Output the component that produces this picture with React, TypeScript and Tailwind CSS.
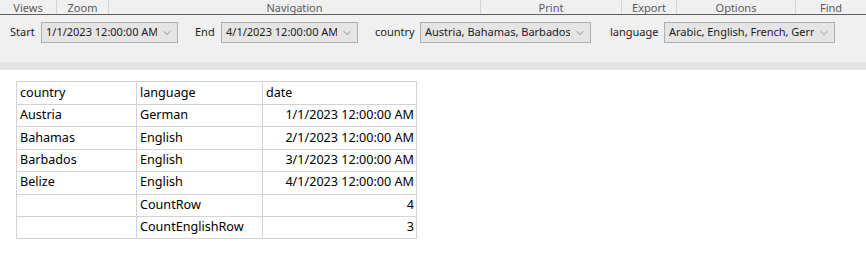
import { ChevronDown } from "lucide-react";

const groups = [
  { label: "Views", w: 57 },
  { label: "Zoom", w: 52 },
  { label: "Navigation", w: 372 },
  { label: "Print", w: 141 },
  { label: "Export", w: 55 },
  { label: "Options", w: 119 },
  { label: "Find", w: 70 },
];

const rows = [
  ["Austria", "German", "1/1/2023 12:00:00 AM"],
  ["Bahamas", "English", "2/1/2023 12:00:00 AM"],
  ["Barbados", "English", "3/1/2023 12:00:00 AM"],
  ["Belize", "English", "4/1/2023 12:00:00 AM"],
  ["", "CountRow", "4"],
  ["", "CountEnglishRow", "3"],
];

function Param({
  label,
  value,
  labelW,
  boxW,
  className = "",
}: {
  label: string;
  value: string;
  labelW: string;
  boxW: string;
  className?: string;
}) {
  return (
    <div className={`flex items-center ${className}`}>
      <span className={`${labelW} shrink-0 text-[11px] text-[#1b1b1b]`}>{label}</span>
      <div className={`${boxW} flex h-[21px] shrink-0 items-center border border-[#adadad] bg-[#e5e5e5] pl-[4px] pr-[4px]`}>
        <span className="min-w-0 flex-1 overflow-hidden whitespace-nowrap text-[11px] text-[#1b1b1b]">{value}</span>
        <ChevronDown className="ml-[4px] h-[12px] w-[12px] shrink-0 text-[#555]" strokeWidth={1.2} />
      </div>
    </div>
  );
}

export default function App() {
  return (
    <div className="h-[259px] w-[866px] overflow-hidden bg-white font-['Noto_Sans',sans-serif]">
      {/* ribbon group captions */}
      <div className="flex h-[14px] bg-[#f0f0f0]">
        {groups.map((g, i) => (
          <div
            key={g.label}
            style={{ width: g.w }}
            className={`flex h-full shrink-0 items-center justify-center text-[11px] leading-none text-[#5a5a5a] ${
              i < groups.length - 1 ? "border-r border-[#d6d6d6]" : ""
            }`}
          >
            {g.label}
          </div>
        ))}
      </div>
      <div className="h-[1px] bg-[#5f5f5f]" />

      {/* parameters */}
      <div className="flex h-[47px] items-start bg-[#f0f0f0] pl-[10px] pt-[7px]">
        <Param label="Start" value="1/1/2023 12:00:00 AM" labelW="w-[31px]" boxW="w-[137px]" />
        <Param label="End" value="4/1/2023 12:00:00 AM" labelW="w-[26px]" boxW="w-[137px]" className="ml-[17px]" />
        <Param
          label="country"
          value="Austria, Bahamas, Barbados, Belize"
          labelW="w-[45px]"
          boxW="w-[171px]"
          className="ml-[17px]"
        />
        <Param
          label="language"
          value="Arabic, English, French, German"
          labelW="w-[54px]"
          boxW="w-[171px]"
          className="ml-[19px]"
        />
      </div>
      <div className="h-[8px] bg-[#e3e3e3]" />

      {/* report body */}
      <div className="pl-[16px] pt-[11px]">
        <table className="border-collapse text-[12.6px] text-black">
          <thead>
            <tr className="h-[23px]">
              <td className="w-[120px] border border-[#d3d3d3] pl-[3px]">country</td>
              <td className="w-[126px] border border-[#d3d3d3] pl-[3px]">language</td>
              <td className="w-[154px] border border-[#d3d3d3] pl-[3px]">date</td>
            </tr>
          </thead>
          <tbody>
            {rows.map((r, i) => (
              <tr key={i} className="h-[22.4px]">
                <td className="border border-[#d3d3d3] pl-[3px]">{r[0]}</td>
                <td className="border border-[#d3d3d3] pl-[3px]">{r[1]}</td>
                <td className="border border-[#d3d3d3] pr-[2px] text-right">{r[2]}</td>
              </tr>
            ))}
          </tbody>
        </table>
      </div>
    </div>
  );
}
